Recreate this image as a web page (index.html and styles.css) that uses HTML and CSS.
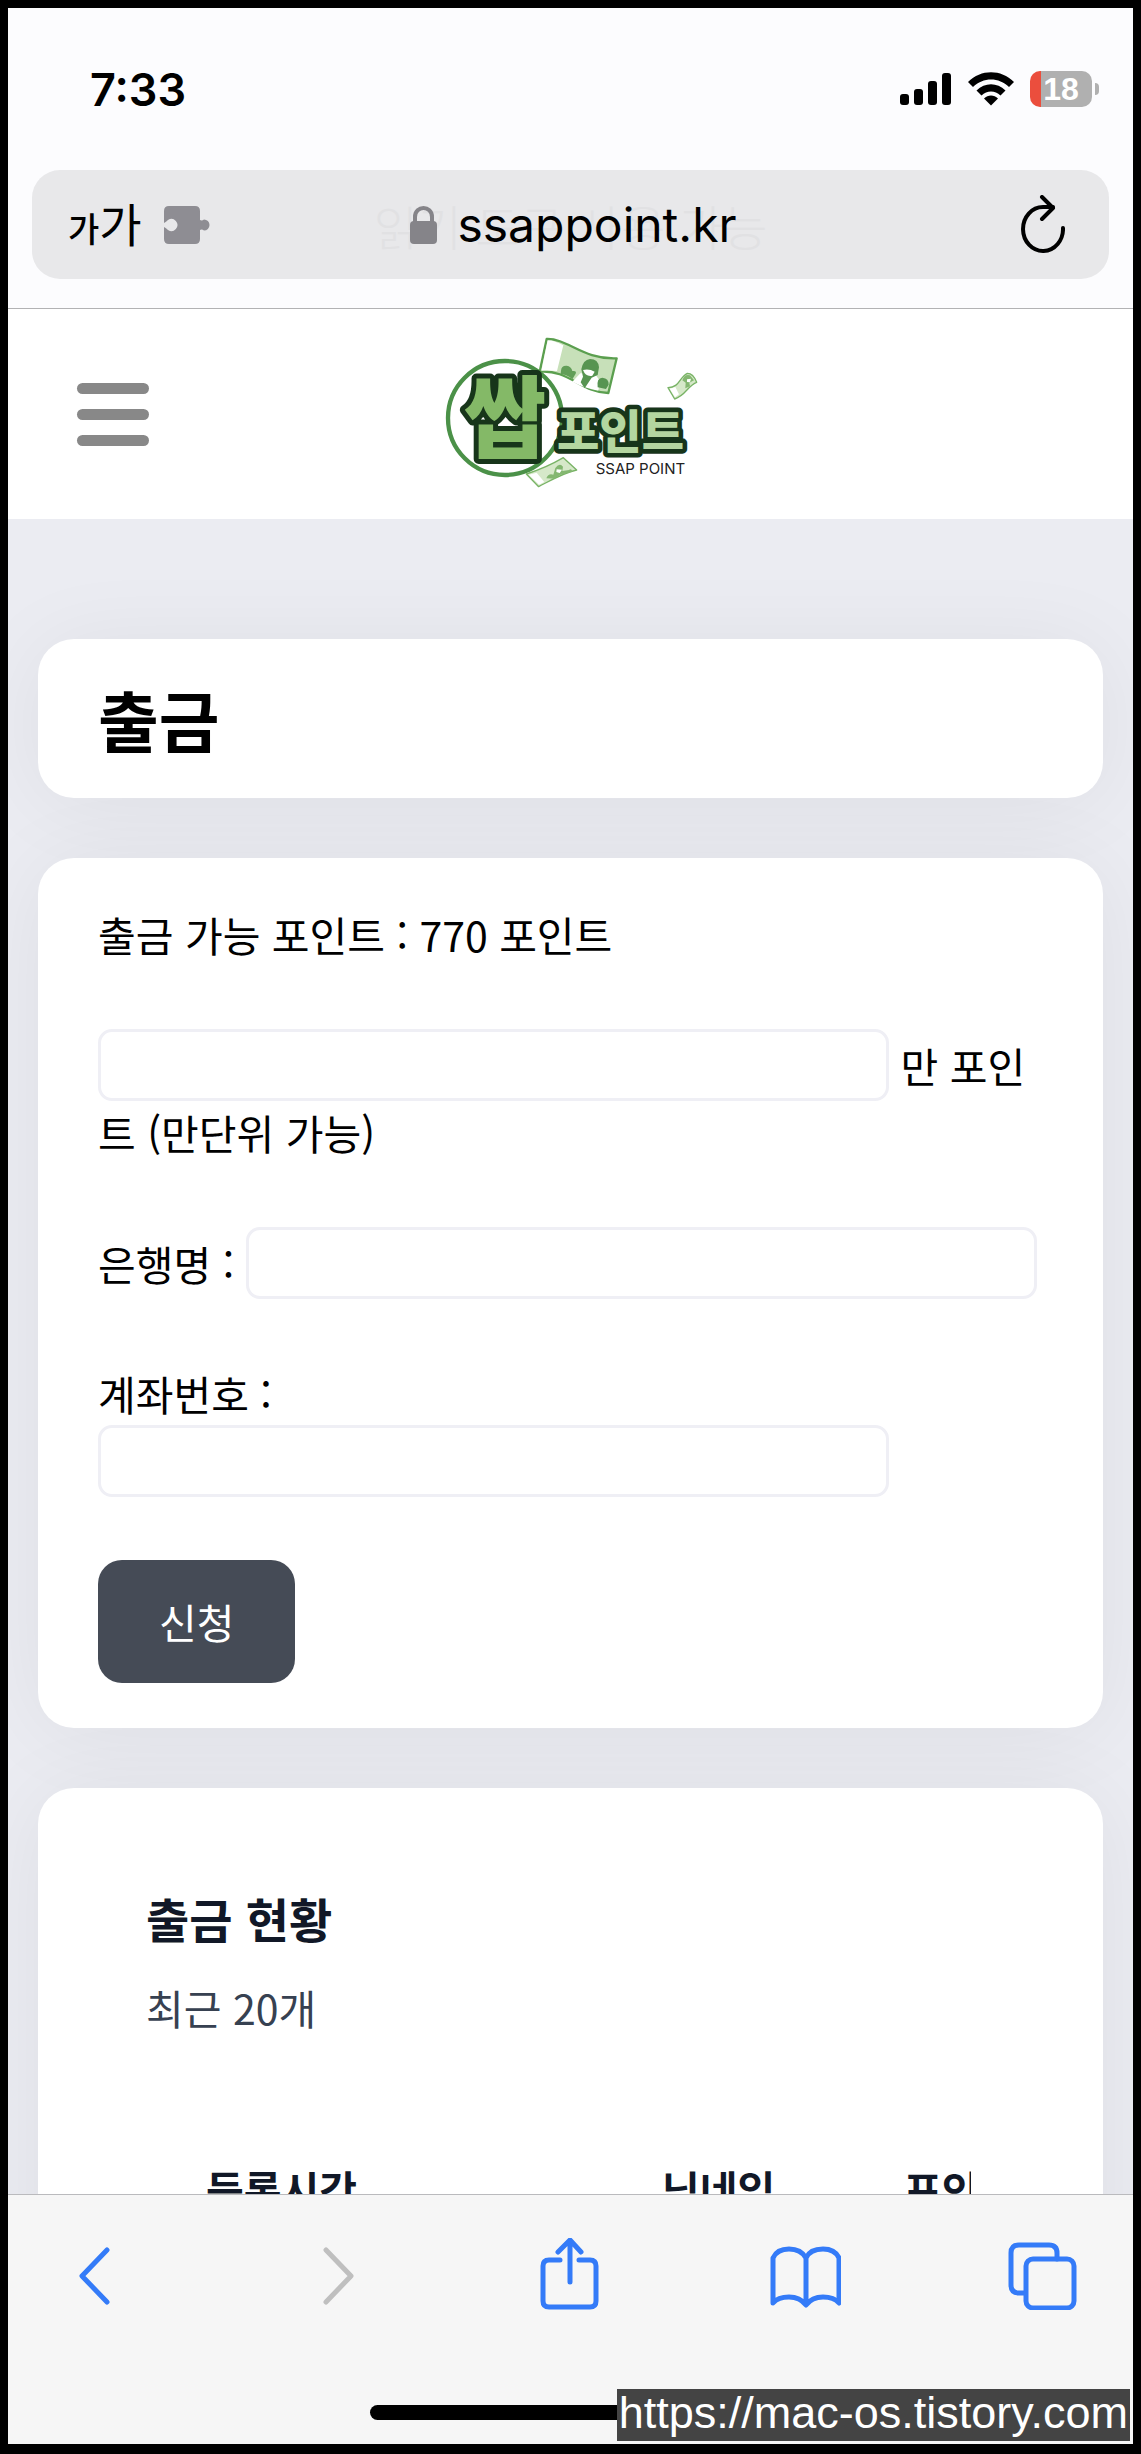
FILE: index.html
```html
<!DOCTYPE html>
<html lang="ko">
<head>
    <meta charset="UTF-8">
    <meta name="viewport" content="width=device-width, initial-scale=1.0">
    <title>출금 - 쌉포인트</title>
    <link rel="stylesheet" href="styles.css">
</head>
<body>
    <div class="phone">
        <div class="browser-top">
            <div class="status">
                <span class="time">7:33</span>
                <div class="status-icons">
                    <svg width="52" height="36" viewBox="0 0 52 36">
                        <rect x="0" y="23" width="9" height="11" rx="3"/>
                        <rect x="14" y="18" width="9" height="16" rx="3"/>
                        <rect x="28" y="10" width="9" height="24" rx="3"/>
                        <rect x="42" y="2" width="9" height="32" rx="3"/>
                    </svg>
                    <svg width="46" height="36" viewBox="0 0 46 36">
                        <path d="M0 11C13-2 33-2 46 11L41 16C31 6 15 6 5 16Z"/>
                        <path d="M8.500 19.500C17 11 29 11 37.500 19.500L32.500 24.500C27 19 19 19 13.500 24.500Z"/>
                        <path d="M16 27.500C20 23.500 26 23.500 30 27.500L23 34.500Z"/>
                    </svg>
                    <div class="battery">
                        <span class="battery-body">18</span>
                        <span class="battery-tip"></span>
                    </div>
                </div>
            </div>
            <div class="url-bar">
                <span class="reader-hint">읽기 도구 사용 가능</span>
                <div class="url-left">
                    <button class="text-size" type="button" aria-label="글자 크기"><span class="small">가</span><span>가</span></button>
                    <svg width="47" height="38" viewBox="0 0 47 38">
                        <path fill="#8e8d93" d="M5 0H31Q36 0 36 5V14Q38 15 40 13.500A5.500 5.500 0 1 1 40 24.500Q38 23 36 24V33Q36 38 31 38H5Q0 38 0 33V21Q2 22 4 24A6 6 0 1 0 4 14Q2 16 0 17V5Q0 0 5 0Z"/>
                    </svg>
                </div>
                <button class="url" type="button">
                    <svg width="27" height="38" viewBox="0 0 27 38">
                        <path fill="none" stroke="#858489" stroke-width="4" d="M5 18V11C5-1 22-1 22 11V18"/>
                        <rect y="15" width="27" height="23" rx="4" fill="#858489"/>
                    </svg>
                    ssappoint.kr
                </button>
                <button class="reload" type="button" aria-label="새로고침">
                    <svg width="44" height="60" viewBox="0 0 44 60" fill="none" stroke="#000" stroke-width="4" stroke-linecap="round" stroke-linejoin="round">
                        <path d="M42 33A20 22 0 1 1 22 12H32"/>
                        <path d="M21 2L32 13L21 24"/>
                    </svg>
                </button>
            </div>
        </div>

        <div class="page">
            <header class="header">
                <button class="menu" type="button" aria-label="메뉴">
                    <span></span>
                    <span></span>
                    <span></span>
                </button>
                <a class="logo" href="#" aria-label="쌉포인트">
                    <svg width="280" height="190" viewBox="0 0 840 570">
                        <circle cx="222" cy="297" r="171" fill="#fff" stroke="#4b9148" stroke-width="13"/>
                        <g stroke="#5b9f4f" stroke-width="7" stroke-linejoin="round">
                            <path fill="#c7e0b9" d="M347 60C410 58 455 122 557 118L532 222C455 222 410 150 326 158Z"/>
                            <path fill="#fff" stroke="none" d="M350 64C366 64 380 70 397 79L378 156Q352 153 331 155Z"/>
                        </g>
                        <path fill="#629e58" d="M390 155Q391 139 407 140Q421 142 424 156Q438 154 434 164L424 181Q407 166 389 165Z"/>
                        <path fill="#fff" d="M424 188L448 163L491 163L507 187L502 215Q462 208 424 188Z"/>
                        <path fill="#579451" d="M451 151Q456 122 477 120Q502 120 504 145L500 168L482 176L461 208L449 190L456 173ZM500 205Q496 177 514 176Q534 178 533 197L525 210Z"/>
                        <path fill="#fff" d="M456 153Q475 149 491 158L484 170Q464 174 456 153Z"/>
                        <g stroke="#78b365" stroke-width="4" stroke-linejoin="round">
                            <path fill="#d6e8c9" d="M711 206C747 205 745 174 769 163Q787 163 797 190C771 199 764 230 731 240Z"/>
                            <path fill="#d6e8c9" d="M286 465C331 451 358 439 397 416L437 453C398 461 363 482 323 503Z"/>
                        </g>
                        <path fill="#fff" d="M716 209L733 204L744 226L732 235ZM293 467L317 461L340 489L324 497Z"/>
                        <path fill="#84b771" d="M754 184Q761 164 777 169L789 184L775 191L777 202L763 208L764 191ZM346 478Q352 462 367 467L373 447Q386 430 396 443L394 456L414 453Q421 447 424 458L387 468L371 479Z"/>
                        <path fill="#fff" d="M768 181L780 179L777 190L768 189ZM377 451L393 452L386 462L376 459Z"/>
                        <text class="logo-big" x="98" y="396">쌉</text>
                        <text class="logo-small" x="378" y="388">포인트</text>
                        <text class="logo-en" x="494" y="466">SSAP POINT</text>
                    </svg>
                </a>
            </header>

            <main class="main">
                <section class="card title-card">
                    <h1>출금</h1>
                </section>

                <form class="card form-card">
                    출금 가능 포인트 : 770 포인트<br><br>
                    <input class="field" id="point" type="text"> <label for="point">만 포인트 (만단위 가능)</label><br><br>
                    <label for="bank">은행명 :</label> <input class="field" id="bank" type="text"><br><br>
                    <label for="account">계좌번호 :</label> <input class="field" id="account" type="text"><br><br>
                    <button class="submit" type="button">신청</button>
                </form>

                <section class="card list-card">
                    <h2>출금 현황</h2>
                    <p>최근 20개</p>
                    <div class="table-wrap">
                        <table>
                            <thead>
                                <tr>
                                    <th class="col-time">등록시간</th>
                                    <th class="col-name">닉네임</th>
                                    <th class="col-point">포인트</th>
                                </tr>
                            </thead>
                        </table>
                    </div>
                </section>
            </main>
        </div>

        <nav class="toolbar">
            <div class="tools">
                <button type="button" aria-label="뒤로">
                    <svg width="72" height="72" viewBox="0 0 72 72"><path d="M48 12L23 38L48 64"/></svg>
                </button>
                <button class="disabled" type="button" aria-label="앞으로" disabled>
                    <svg width="72" height="72" viewBox="0 0 72 72"><path d="M30 12L55 38L30 64"/></svg>
                </button>
                <button type="button" aria-label="공유">
                    <svg width="72" height="72" viewBox="0 0 72 72"><path d="M27 22H16Q10 22 10 28V63Q10 69 16 69H57Q63 69 63 63V28Q63 22 57 22H46M37 44V3M25 14L37 2L48 14"/></svg>
                </button>
                <button type="button" aria-label="책갈피">
                    <svg width="72" height="72" viewBox="0 0 72 72"><path d="M37 20Q32 11 20 11Q8 11 4 20V65Q9 59 20 59Q31 59 37 67Q43 59 54 59Q65 59 70 65V20Q66 11 54 11Q41 11 37 20V66"/></svg>
                </button>
                <button type="button" aria-label="탭">
                    <svg width="72" height="72" viewBox="0 0 72 72"><path d="M18 55H13Q5 55 5 47V15Q5 7 13 7H43Q51 7 51 15V21"/><rect x="20" y="21" width="48" height="49" rx="7"/></svg>
                </button>
            </div>
            <span class="home-bar"></span>
            <a class="watermark" href="https://mac-os.tistory.com">https://mac-os.tistory.com</a>
        </nav>
    </div>
</body>
</html>
```
FILE: styles.css
```css
* {
    margin: 0;
    padding: 0;
    box-sizing: border-box;
}
body {
    background: #000;
    font-family: "Noto Sans CJK KR", sans-serif;
    color: #000;
}
button {
    border: none;
    background: none;
    font: inherit;
    color: inherit;
}
svg {
    display: block;
}
.phone {
    display: flex;
    flex-direction: column;
    height: 100vh;
    border: 8px solid #000;
    border-bottom-width: 10px;
    background: #fff;
}

/* status bar + address bar */
.browser-top {
    background: #fcfcfe;
    border-bottom: 1px solid #b2b2b4;
    padding: 0 24px 29px;
}
.status {
    display: flex;
    justify-content: space-between;
    align-items: center;
    height: 162px;
    padding: 0 10px 0 58px;
}
.time {
    font-family: Inter, sans-serif;
    font-size: 45px;
    font-weight: 600;
}
.status-icons {
    display: flex;
    align-items: center;
    gap: 16px;
}
.battery {
    display: flex;
    align-items: center;
    gap: 3px;
}
.battery-body {
    width: 62px;
    height: 36px;
    border-radius: 10px;
    background: linear-gradient(90deg, #eb4e3d 11px, #b0b0b0 11px);
    color: #fff;
    font: bold 32px/36px "Liberation Sans", sans-serif;
    text-align: center;
}
.battery-tip {
    width: 4px;
    height: 12px;
    border-radius: 0 4px 4px 0;
    background: #b0b0b0;
}
.url-bar {
    position: relative;
    display: grid;
    grid-template-columns: 1fr auto 1fr;
    align-items: center;
    height: 109px;
    padding: 0 44px 0 36px;
    border-radius: 28px;
    background: #e8e8ea;
}
.reader-hint {
    position: absolute;
    left: 0;
    right: 0;
    text-align: center;
    font-size: 48px;
    font-weight: 300;
    color: #e1e1e3;
}
.url-left {
    display: flex;
    align-items: center;
    gap: 22px;
}
.text-size {
    display: flex;
    align-items: baseline;
    font-size: 46px;
    line-height: 60px;
}
.text-size .small {
    font-size: 34px;
    font-weight: 500;
}
.url {
    position: relative;
    display: flex;
    align-items: center;
    gap: 20px;
    margin-left: 14px;
    font-family: Inter, sans-serif;
    font-size: 48px;
}
.reload {
    justify-self: end;
}

/* site */
.page {
    flex: 1;
    min-height: 0;
    overflow: hidden;
    background: #ebecf2;
}
.header {
    display: grid;
    grid-template-columns: 1fr auto 1fr;
    align-items: center;
    height: 210px;
    padding: 0 69px;
    background: #fff;
}
.menu {
    display: flex;
    flex-direction: column;
    gap: 15px;
    width: 72px;
}
.menu span {
    height: 11px;
    border-radius: 6px;
    background: #888;
}
.logo-big,
.logo-small {
    font-weight: 900;
    stroke: #17351a;
    paint-order: stroke;
    stroke-linejoin: round;
}
.logo-big {
    font-size: 270px;
    fill: #84b967;
    stroke-width: 30px;
}
.logo-small {
    font-size: 138px;
    fill: #b4d6a0;
    stroke-width: 28px;
}
.logo-en {
    font-family: Inter, sans-serif;
    font-size: 45px;
    fill: #222;
}
.main {
    padding: 120px 30px 60px;
}
.card {
    margin-bottom: 60px;
    border-radius: 36px;
    background: #fff;
    box-shadow: 0 6px 90px rgba(0, 0, 0, 0.06);
}
.title-card {
    padding: 30px 60px;
}
h1 {
    font-size: 66px;
    line-height: 99px;
}
.form-card {
    padding: 45px 60px;
    font-size: 41px;
    line-height: 63px;
}
.field {
    width: 791px;
    max-width: 100%;
    height: 72px;
    padding: 0 20px;
    border: 3px solid #efeff5;
    border-radius: 14px;
    background: #fff;
    font: inherit;
    vertical-align: baseline;
}
.submit {
    display: block;
    padding: 30px 61px;
    border-radius: 24px;
    background: #454b56;
    color: #fff;
}
.list-card {
    padding: 94px 108px;
    color: #111827;
}
h2 {
    font-size: 47px;
    line-height: 72px;
}
.list-card p {
    margin-top: 22px;
    font-size: 41px;
    line-height: 63px;
    color: #374151;
}
.table-wrap {
    margin: 88px 24px 0;
    overflow: hidden;
}
table {
    border-collapse: collapse;
    table-layout: fixed;
    width: 980px;
    font-size: 41px;
    line-height: 63px;
}
th {
    padding: 30px 36px;
    text-align: left;
    white-space: nowrap;
}
.col-time {
    width: 456px;
}
.col-name {
    width: 242px;
}

/* bottom bar */
.toolbar {
    position: relative;
    display: flex;
    flex-direction: column;
    align-items: center;
    justify-content: space-between;
    height: 250px;
    padding: 43px 0 24px;
    border-top: 1px solid #bababd;
    background: #f6f6f6;
}
.tools {
    display: flex;
    justify-content: space-between;
    width: 100%;
    padding: 0 55px 0 51px;
}
.tools svg {
    fill: none;
    stroke: #347bf8;
    stroke-width: 5;
    stroke-linecap: round;
    stroke-linejoin: round;
}
.tools .disabled svg {
    stroke: #bfbfbf;
}
.home-bar {
    width: 402px;
    height: 15px;
    border-radius: 8px;
    background: #000;
}
.watermark {
    position: absolute;
    right: 3px;
    bottom: 3px;
    padding: 0 2px 5px;
    background: #444;
    color: #fff;
    font: 45px/47px "Liberation Sans", sans-serif;
    text-decoration: none;
}
```
